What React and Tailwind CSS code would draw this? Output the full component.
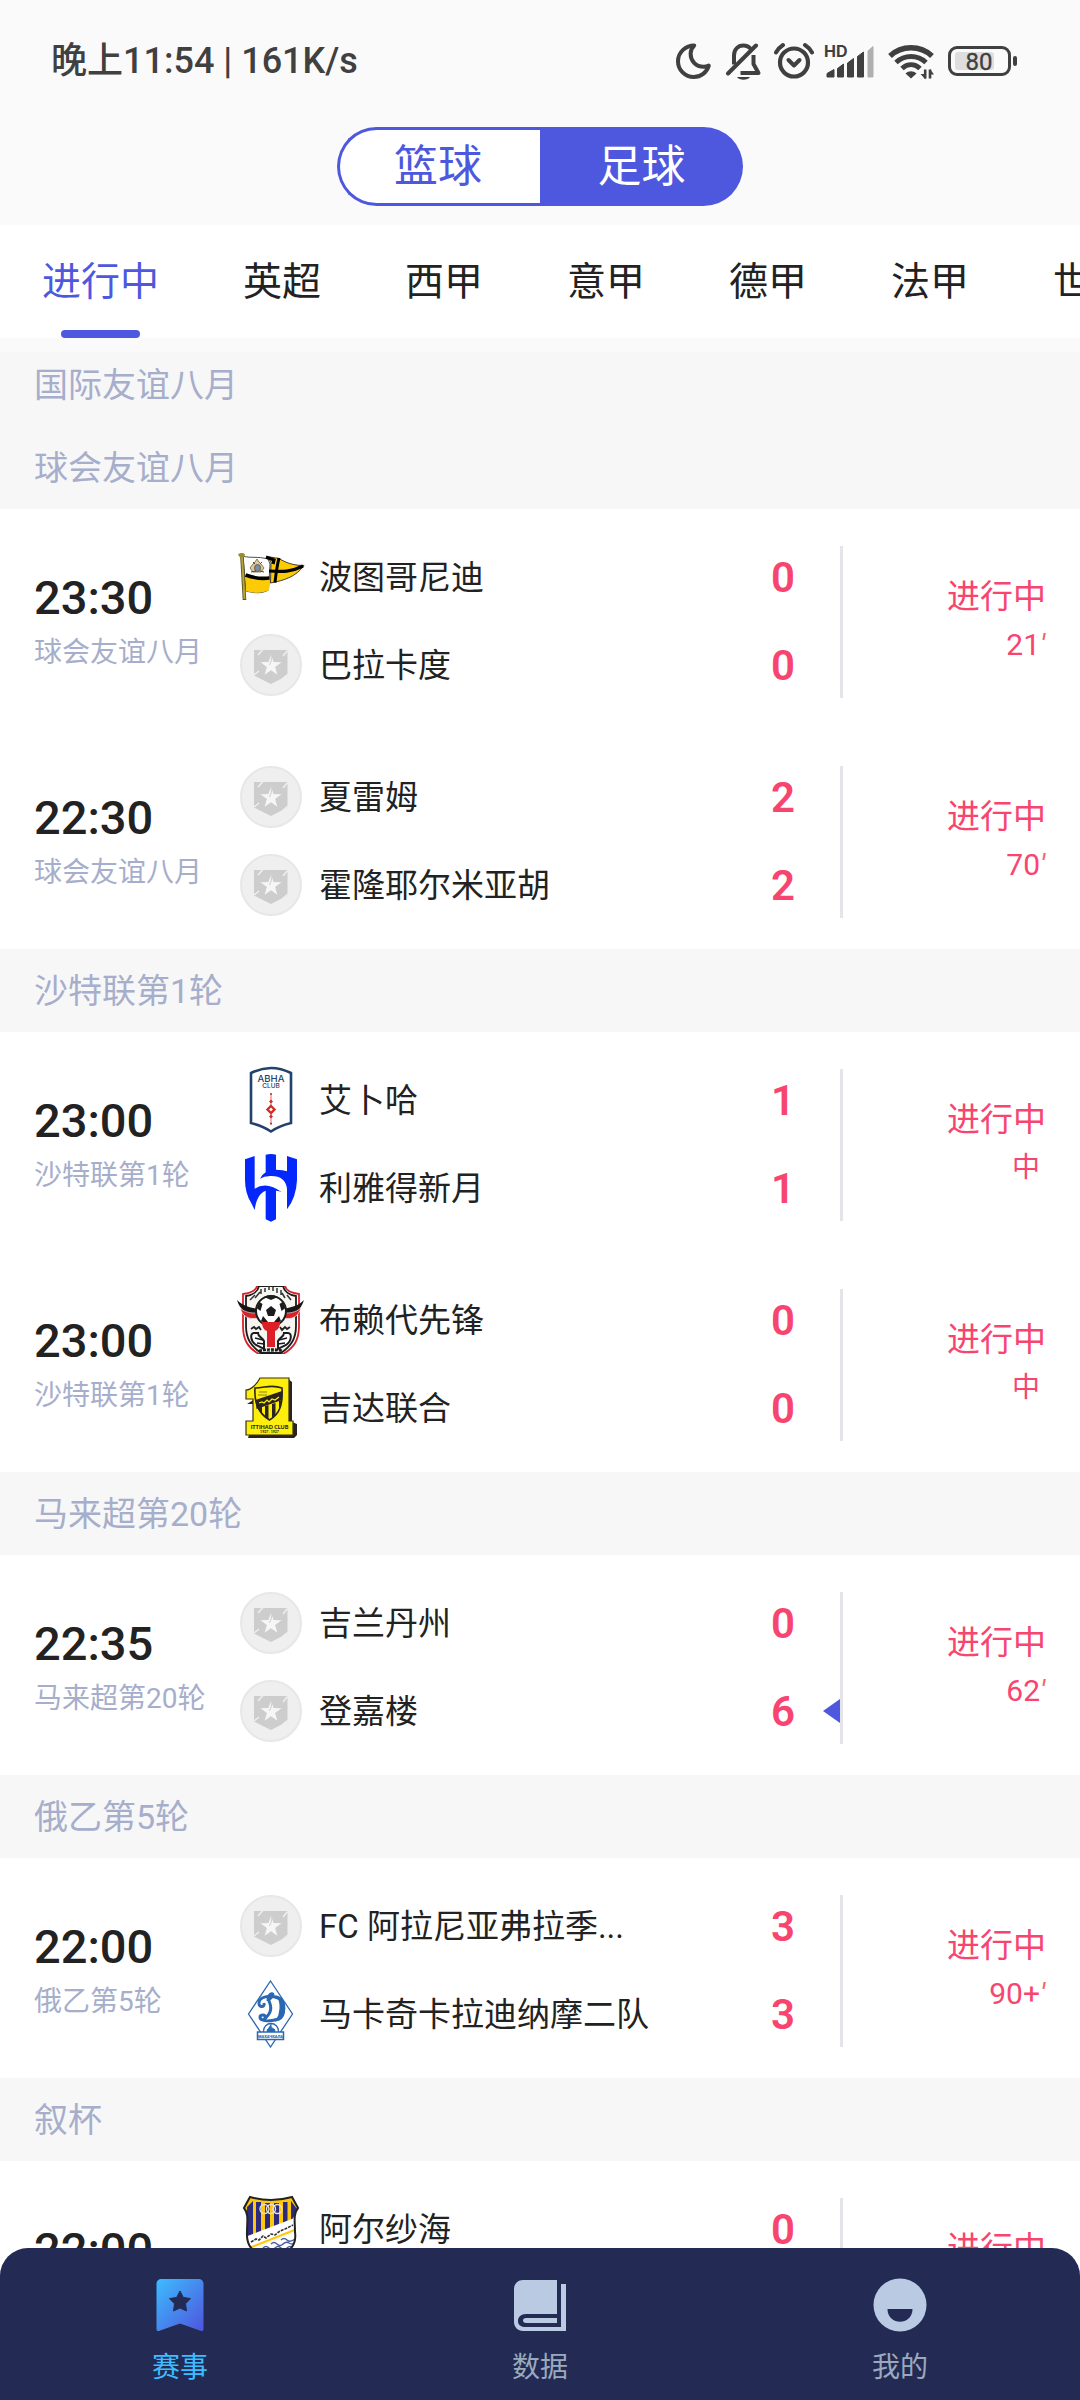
import React from "react";

/* ---------- status bar icons ---------- */

const INK = "#404040";

function MoonIcon() {
  return (
    <svg width="36" height="42" viewBox="0 0 36 42" fill="none" aria-hidden="true">
      <path
        d="M18.2 5.4C10 5.4 2 12 2 21.2a15.8 15.8 0 0 0 15.8 15.8c7 0 13-4.600 15-11.400a12.500 12.500 0 0 1-5.200 1.200c-8 0-13-6-13-13 0-3.400 1.400-6.400 3.600-8.400z"
        stroke={INK}
        strokeWidth="4"
        strokeLinejoin="round"
      />
    </svg>
  );
}

function BellOffIcon() {
  return (
    <svg width="36" height="42" viewBox="0 0 36 42" fill="none" aria-hidden="true">
      <path d="M8 24.500V15.500C8 9.500 12 5.500 17.200 5.500c3.400 0 6 1.400 7.600 3.600" stroke={INK} strokeWidth="4" />
      <path d="M27.500 15v9l5 9H14.500" stroke={INK} strokeWidth="4" strokeLinejoin="round" />
      <path d="M2 33.500L30 5.500" stroke={INK} strokeWidth="4" strokeLinecap="round" />
      <path d="M11 37h13c-2 3.600-11 3.600-13 0z" fill={INK} />
    </svg>
  );
}

function AlarmIcon() {
  return (
    <svg width="40" height="42" viewBox="0 0 40 42" fill="none" aria-hidden="true">
      <circle cx="20" cy="22.500" r="14" stroke={INK} strokeWidth="4.200" />
      <path d="M14.500 20l5.500 5.500 5.500-5.500" stroke={INK} strokeWidth="4" strokeLinecap="round" strokeLinejoin="round" />
      <path d="M2 12.500c1.600-3 4-5.600 7-7.500M38 12.500c-1.600-3-4-5.600-7-7.500" stroke={INK} strokeWidth="4" strokeLinecap="round" />
    </svg>
  );
}

function SignalIcon() {
  return (
    <svg width="52" height="42" viewBox="0 0 52 42" aria-hidden="true">
      <path d="M3 33.500l7-4V37H3zM13.500 28.500l6-4.500v13h-6zM23.500 23l6-4.500V37h-6zM33.500 16.500l6-4.500v25h-6z" fill={INK} stroke={INK} strokeLinejoin="round" />
      <path d="M44 11l5-4.500V37h-5z" fill="#b0b0b0" stroke="#b0b0b0" strokeLinejoin="round" />
      <text x="0" y="17" fontSize="16" fontWeight="700" fill={INK} fontFamily="Inter, sans-serif">
        HD
      </text>
    </svg>
  );
}

function WifiIcon() {
  return (
    <svg width="48" height="42" viewBox="0 0 48 42" fill="none" aria-hidden="true">
      <path d="M2 16c11.500-11 30.500-11 42 0" stroke={INK} strokeWidth="5.400" />
      <path d="M8 22.500c8.500-8 21.500-8 30 0" stroke={INK} strokeWidth="5" />
      <path d="M14 28.500c5.500-5 12.500-5 18 0" stroke={INK} strokeWidth="5" />
      <path d="M17.500 33.500c3.300-3 7.700-3 11 0L23 38.500z" fill={INK} />
      <path d="M37.200 29.500V38.500M42 29.500V38.500" stroke={INK} strokeWidth="2.600" />
      <path d="M37.500 39.500l-5-5.500h5zM42 29l4 5.500h-4z" fill={INK} />
    </svg>
  );
}

function BatteryIcon() {
  return (
    <svg width="70" height="42" viewBox="0 0 70 42" fill="none" aria-hidden="true">
      <rect x="1.500" y="7.500" width="60" height="27" rx="7.500" stroke={INK} strokeWidth="3" />
      <rect x="7" y="12" width="39" height="18" rx="3" fill="#dedede" />
      <rect x="65" y="16" width="4" height="10" rx="2" fill={INK} />
      <text x="31" y="29.500" textAnchor="middle" fontSize="24" fill={INK} stroke={INK} strokeWidth=".3" fontFamily="Roboto, sans-serif">
        80
      </text>
    </svg>
  );
}

/* ---------- club crests ---------- */

function DefaultCrest() {
  return (
    <svg width="68" height="68" viewBox="0 0 68 68" aria-hidden="true">
      <circle cx="34" cy="34" r="30" fill="#efefef" stroke="#e7e7e7" strokeWidth="2" />
      <path d="M17 19h33.500v25.500L34 53 17 44.500z" fill="#cdcdcd" />
      <path d="M21 24l5-5.500M46 25l4.500-5.500M17 44l5-4M45 48l6-5" stroke="#efefef" strokeWidth="1.500" />
      <path d="M34 23.500l2.500 7.500 8 .2-6.400 4.800 2.300 7.700L34 39.200l-6.400 4.500 2.300-7.700-6.400-4.800 8-.2z" fill="#f6f6f6" />
      <path d="M34 24l.5 5-2 5" stroke="#cdcdcd" strokeWidth="1" fill="none" />
    </svg>
  );
}

function PennantCrest() {
  return (
    <svg width="68" height="68" viewBox="0 0 68 68" aria-hidden="true">
      <path d="M6 13c7 2.500 14 0 25 3l2 5-1.500 26c-7 4-15 3-22.500 1z" fill="#fff" stroke="#222" strokeWidth=".8" />
      <path d="M8.500 33c8 2 15 3 24.500 2.500L32 47c-7 3.500-15 3.500-23 1z" fill="#fccb05" />
      <path d="M8.500 32c8 3 16 4 24 3" stroke="#000" strokeWidth="3.500" fill="none" />
      <path d="M30 13.500l12 2c8 5 16 7 25 7-6 8-14 14-33.500 17.500l.5-21z" fill="#fccb05" stroke="#111" strokeWidth=".8" />
      <path d="M29 14l8 3-1 4M66 23c-12 6-20 6-34 5" stroke="#000" strokeWidth="3.200" fill="none" />
      <path d="M42 15c-2 8-3 15-4 24.500" stroke="#000" strokeWidth="3" fill="none" />
      <path d="M13 25l3-4 2-2 2-3 2 3 2 2 3 4-3 4h-8z" fill="#d8cba8" stroke="#8b7a45" strokeWidth="1" />
      <ellipse cx="20.500" cy="25" rx="3" ry="3.500" fill="#6d93ab" stroke="#7a3d22" strokeWidth=".8" />
      <path d="M14 29l5-1M27 29l-4-1M16 19l2 2M25 19l-2 2" stroke="#54451f" strokeWidth="1" />
      <path d="M5 14l2.500 43" stroke="#59531b" strokeWidth="3.600" />
      <path d="M5 14l2.500 42" stroke="#b5a13f" strokeWidth="2" />
      <path d="M1 11.500c1.500-2 6-2 7 0l-1 3H3z" fill="#9c8a2c" />
    </svg>
  );
}

function AbhaCrest() {
  return (
    <svg width="68" height="68" viewBox="0 0 68 68" aria-hidden="true">
      <path d="M14 7Q24 2 34 2t20 5v50Q42 60 34 65.500 26 60 14 57z" fill="#fff" stroke="#23426b" strokeWidth="2.600" />
      <text x="34" y="16" textAnchor="middle" fontSize="9.500" fontWeight="500" fill="#23426b" fontFamily="Inter, sans-serif">
        ABHA
      </text>
      <text x="34" y="21.500" textAnchor="middle" fontSize="6.500" fontWeight="500" fill="#23426b" fontFamily="Inter, sans-serif">
        CLUB
      </text>
      <path d="M34 27v32" stroke="#d98683" strokeWidth="1.200" />
      <path d="M34 33.500l2 2-2 2-2-2zM34 48.500l2 2-2 2-2-2z" fill="#cf2f2b" />
      <path d="M34 40l3.500 3.500L34 47l-3.500-3.500z" fill="#fff" stroke="#cf2f2b" strokeWidth="2.400" />
      <path d="M33 28h2M33 57.500h2" stroke="#cf2f2b" strokeWidth="1.600" />
    </svg>
  );
}

function HilalCrest() {
  return (
    <svg width="68" height="68" viewBox="51 342 204 204" aria-hidden="true">
      <g fill="#0428fb">
        <path d="M75 358L104 348V446Q140 422 186 457 178 452 168 452V538L153 545 137 538V452Q110 462 104 510L94 490Q75 460 75 420z" />
        <path d="M137 344Q153 340 168 344V389Q190 389 201 394V348L231 358V420Q229 472 201 508V446Q196 406 150 408 132 409 120 416 128 402 137 397z" />
      </g>
    </svg>
  );
}

function RaedCrest() {
  return (
    <svg width="68" height="68" viewBox="0 0 68 68" aria-hidden="true">
      <path d="M20 0C19 4 14 7 6 8v32c0 14 5 22 16 28h24c11-6 16-14 16-28V8c-8-1-13-4-14-8z" fill="#fff" stroke="#d8222a" strokeWidth="1.800" />
      <path d="M22 0c-1 5-6 9-13 10v30c0 13 5 20 15 27h20c10-7 15-14 15-27V10C52 9 47 5 46 0z" fill="#f7f5f0" stroke="#1c1c1c" strokeWidth="1.800" />
      <path d="M13 14l5-5M18 12l5-6M24 8V3M28 6V2M32 4V0M36 5V1M40 7V2M44 9V4M48 12l-3-5M54 14l-4-5" stroke="#333" strokeWidth="1.500" />
      <path d="M0 14c6 6 12 7 20 9l2 7c-10 0-19-5-22-16zM67 14c-6 6-12 7-20 9l-2 7c10 0 19-5 22-16z" fill="#161616" />
      <path d="M3 22c6 5 12 5 16 5l2 5C12 34 6 31 3 22zM64 22c-6 5-12 5-16 5l-2 5c9 2 15-1 18-10z" fill="#d8222a" stroke="#fff" strokeWidth=".6" />
      <circle cx="34" cy="25" r="15" fill="#fff" stroke="#1c1c1c" strokeWidth="2" />
      <path d="M34 20l5 4-2 6h-6l-2-6zM27 11l7 3 7-3-4-1.500h-6zM19.500 22l4 3 2-7-3-2zM48.500 22l-4 3-2-7 3-2zM24 35l2-5 5 6v3zM44 35l-2-5-5 6v3z" fill="#1c1c1c" />
      <path d="M14 43l3-2 2 2 3-2 2 3M43 41l2 3 3-3 2 2 3-2" stroke="#222" strokeWidth="1.800" fill="none" />
      <path d="M17 47c-4 0-4 8 2 12l8 4v-8c-2-4-6-4-6-8zM51 47c4 0 4 8-2 12l-8 4v-8c2-4 6-4 6-8z" fill="#fff" stroke="#1c1c1c" strokeWidth="2" />
      <path d="M18 52l8 2M20 57l7 1M50 52l-8 2M48 57l-7 1" stroke="#1c1c1c" strokeWidth="1.400" />
      <path d="M25 36h18c0 5-2 8-5 9v16h-8V45c-3-1-5-4-5-9z" fill="#dd2027" />
      <path d="M22 65c8-2 16-2 24 0M26 68c5-2 11-2 16 0" stroke="#1c1c1c" strokeWidth="2.600" strokeDasharray="3 1" fill="none" />
    </svg>
  );
}

function IttihadCrest() {
  return (
    <svg width="68" height="68" viewBox="0 0 68 68" aria-hidden="true">
      <path d="M10 30h6v18l-5 16h46l3-3V50l-5-2V8l-5-4z" fill="#2b2320" />
      <path d="M23 4h29v43h4v14H9V47h7V25H9v-9c5 0 11-6 14-12z" fill="#fdee0b" stroke="#3a3212" strokeWidth="1.200" />
      <path d="M18 14c10 0 16-4 27 0 1 16-2 26-12.500 32C21 39 17 28 18 14z" fill="#fdee0b" stroke="#2b2320" strokeWidth="1.600" />
      <path d="M18.500 26L45 17v9l-25.500 9z" fill="#2b2320" />
      <path d="M21 34l4-1.500V41l-4-6zM28 32l3.500-1v14L28 43zM35 30l3.500-1v12L35 44zM42 27l3-1-3 10z" fill="#2b2320" />
      <path d="M22 29l3-1 2 1 3-3 2 2 3-3 3 1 4-3" stroke="#fdee0b" strokeWidth="1.200" fill="none" />
      <path d="M22 18h8M21 21h9" stroke="#8a8118" strokeWidth="1.200" />
      <text x="32.500" y="54.500" textAnchor="middle" fontSize="5.500" fontWeight="900" fill="#2b2320" fontFamily="Lato, sans-serif">
        ITTIHAD CLUB
      </text>
      <text x="32.500" y="59" textAnchor="middle" fontSize="3.500" fontWeight="700" fill="#2b2320" fontFamily="Lato, sans-serif">
        1927 . 1927
      </text>
    </svg>
  );
}

function DynamoCrest() {
  return (
    <svg width="68" height="68" viewBox="0 0 68 68" aria-hidden="true">
      <path d="M33.500 1L55.500 34 33.500 67 11.500 34z" fill="#fff" stroke="#2a68b2" strokeWidth="1.300" />
      <path
        d="M26 40c-4-1-4-5 0-5 3 0 3 4 0 5 3 2 8 1 16-1 6-3 7-18-1-21-7-3-20-2-19 6 1 4 6 3 5-1"
        fill="none"
        stroke="#2a68b2"
        strokeWidth="3"
      />
      <path d="M41 17c9 3 8 20-1 23 4-6 5-17 1-23z" fill="#2a68b2" stroke="#2a68b2" strokeWidth="2" />
      <path d="M31 21c0-7 5-9 5-6s-5 3-4 6 3 6 1 11-6 6-5 8" fill="none" stroke="#2a68b2" strokeWidth="3" />
      <circle cx="34" cy="51" r="7.500" fill="#fff" stroke="#2a68b2" strokeWidth="1.300" />
      <path d="M34 44v3l-4 3M34 47l4 3M30 50l4-2 4 2-1 3h-6z" fill="#2a68b2" stroke="#2a68b2" />
      <rect x="20.500" y="52" width="26" height="7.500" fill="#fff" stroke="#2a68b2" strokeWidth="1.500" />
      <text x="33.500" y="57.500" textAnchor="middle" fontSize="4" fontWeight="900" fill="#2a68b2" fontFamily="Roboto, sans-serif">
        МАХАЧКАЛА
      </text>
    </svg>
  );
}

function SahelCrest() {
  const shield = "M13 2c14 4 28 4 42 0l6 11c-5 6-3 14-3 24 2 14-5 20-24 30C15 57 9 51 10 37c0-10 2-18-3-24z";
  return (
    <svg width="68" height="68" viewBox="0 0 68 68" aria-hidden="true">
      <defs>
        <clipPath id="sahel-shield">
          <path d={shield} />
        </clipPath>
      </defs>
      <g clipPath="url(#sahel-shield)">
        <path d="M0 0h68v68H0z" fill="#fdc70c" />
        <path d="M10 12l6-6v35h-6zM19 7h5v34h-5zM28 8h5v32h-5zM37 8h5v30h-5zM46 7h4.500v28H46zM54 6l6 8-6 14z" fill="#2c2a7c" />
        <path d="M8 42l52-20v14L12 56z" fill="#fff" />
        <path d="M14 47l5-3 3 1 4-4 3 2 5-4 4 1 5-4 5-2 8-4" stroke="#333" strokeWidth="1.600" strokeDasharray="3 1" fill="none" />
        <path d="M12 56l48-20v32H12z" fill="#fff" />
        <path d="M10 54l50-20" stroke="#fdc70c" strokeWidth="2" />
        <path d="M44 45q3-3 6 0t8-1M34 49q3-3 6 0t6 0 6-1 6 0M26 53q3-3 6 0t6 0 6 0 6 0 6 0M22 57q3-3 6 0t6 0 6 0 6 0" stroke="#4a5f9f" strokeWidth="1.400" fill="none" />
      </g>
      <path d={shield} fill="none" stroke="#222" strokeWidth="2" />
      <g fill="none" stroke="#e8e0d8" strokeWidth="1.400">
        <circle cx="27.500" cy="14" r="4.500" />
        <circle cx="34" cy="14" r="4.500" />
        <circle cx="40.500" cy="14" r="4.500" />
      </g>
    </svg>
  );
}

/* ---------- bottom bar icons ---------- */

function BookmarkIcon() {
  return (
    <svg width="54" height="54" viewBox="0 0 54 54" aria-hidden="true">
      <defs>
        <linearGradient id="bookmark-fill" x1="0" y1="0" x2="1" y2="1">
          <stop offset="0" stopColor="#3cbdff" />
          <stop offset="1" stopColor="#4f54dd" />
        </linearGradient>
      </defs>
      <path d="M8.500 1h37c3 0 5 2 5 5v45c0 2-1.500 2.500-3 1.800L27 45.500 6.500 52.800C5 53.500 3.500 53 3.500 51V6c0-3 2-5 5-5z" fill="url(#bookmark-fill)" />
      <path d="M27 13l3.300 6.400 7.200 1.200-5 5.200 1 7.200-6.500-3-6.500 3 1-7.200-5-5.200 7.200-1.200z" fill="#232a54" stroke="#232a54" strokeLinejoin="round" />
    </svg>
  );
}

function BookIcon() {
  return (
    <svg width="54" height="54" viewBox="0 0 54 54" aria-hidden="true">
      <path d="M10 2h34v34H13c-5 0-8 3-8 7s3 6 8 6h35V6h5v47H10c-5 0-9-4-9-9V11c0-5 4-9 9-9z" fill="#b9cae2" />
      <path d="M13 40h31v5H13c-4 0-4-5 0-5z" fill="#b9cae2" />
    </svg>
  );
}

function SmileIcon() {
  return (
    <svg width="54" height="54" viewBox="0 0 54 54" aria-hidden="true">
      <circle cx="27" cy="27" r="26.500" fill="#b9cae2" />
      <path d="M14.500 31h25c0 17-25 17-25 0z" fill="#232a54" />
    </svg>
  );
}

/* ---------- data ---------- */

const leagues = ["英超", "西甲", "意甲", "德甲", "法甲", "世界杯"];

const sections = [
  { title: "国际友谊八月", matches: [] },
  {
    title: "球会友谊八月",
    matches: [
      {
        time: "23:30",
        round: "球会友谊八月",
        minute: "21",
        teams: [
          { name: "波图哥尼迪", score: 0, crest: PennantCrest },
          { name: "巴拉卡度", score: 0, crest: DefaultCrest },
        ],
      },
      {
        time: "22:30",
        round: "球会友谊八月",
        minute: "70",
        teams: [
          { name: "夏雷姆", score: 2, crest: DefaultCrest },
          { name: "霍隆耶尔米亚胡", score: 2, crest: DefaultCrest },
        ],
      },
    ],
  },
  {
    title: "沙特联第1轮",
    matches: [
      {
        time: "23:00",
        round: "沙特联第1轮",
        teams: [
          { name: "艾卜哈", score: 1, crest: AbhaCrest },
          { name: "利雅得新月", score: 1, crest: HilalCrest },
        ],
      },
      {
        time: "23:00",
        round: "沙特联第1轮",
        teams: [
          { name: "布赖代先锋", score: 0, crest: RaedCrest },
          { name: "吉达联合", score: 0, crest: IttihadCrest },
        ],
      },
    ],
  },
  {
    title: "马来超第20轮",
    matches: [
      {
        time: "22:35",
        round: "马来超第20轮",
        minute: "62",
        teams: [
          { name: "吉兰丹州", score: 0, crest: DefaultCrest },
          { name: "登嘉楼", score: 6, crest: DefaultCrest, scored: true },
        ],
      },
    ],
  },
  {
    title: "俄乙第5轮",
    matches: [
      {
        time: "22:00",
        round: "俄乙第5轮",
        minute: "90+",
        teams: [
          { name: "FC 阿拉尼亚弗拉季...", score: 3, crest: DefaultCrest },
          { name: "马卡奇卡拉迪纳摩二队", score: 3, crest: DynamoCrest },
        ],
      },
    ],
  },
  {
    title: "叙杯",
    matches: [
      {
        time: "22:00",
        round: "叙杯",
        teams: [{ name: "阿尔纱海", score: 0, crest: SahelCrest }],
      },
    ],
  },
];

/* ---------- parts ---------- */

function Match({ match }) {
  return (
    <li className="flex min-h-[220px] items-start bg-white pr-8 pl-[34px]">
      <div className="w-[203px] shrink-0 pt-[62px] whitespace-nowrap">
        <p className="text-[47px] leading-[54px] font-medium text-[#222]">{match.time}</p>
        <p className="mt-2 text-[28px] leading-10 text-[#a6aecb]">{match.round}</p>
      </div>
      <ul className="flex min-w-0 flex-1 flex-col gap-5 pt-[34px]">
        {match.teams.map((team) => (
          <li key={team.name} className="relative flex h-[68px] items-center pr-[45px]">
            <team.crest />
            <span className="ml-[14px] min-w-0 flex-1 truncate pt-0.5 text-[33px] leading-[48px] text-[#222]">{team.name}</span>
            <span className="pt-0.5 text-[42px] leading-[48px] font-semibold text-[#f8456f]">{team.score}</span>
            {team.scored && (
              <svg className="absolute right-0" width="17" height="24" viewBox="0 0 17 24" aria-label="刚刚进球">
                <path d="M17 0v24L0 12z" fill="#4e58de" />
              </svg>
            )}
          </li>
        ))}
      </ul>
      <div className="mt-[37px] h-[152px] w-[3px] shrink-0 bg-[#e4e4ea]" />
      <div className="flex w-[205px] shrink-0 flex-col items-end pt-[66px] text-[#f8456f]">
        <p className="pr-0.5 text-[33px] leading-[44px]">进行中</p>
        <p className="mt-2 flex text-[30px] leading-9">
          {match.minute ? (
            <>
              {match.minute}
              <span className="w-2 text-[#f5655e] italic">′</span>
            </>
          ) : (
            <span className="pr-2 text-[28px]">中</span>
          )}
        </p>
      </div>
    </li>
  );
}

function NavItem({ href, label, icon, active }) {
  return (
    <a
      href={href}
      aria-current={active ? "page" : undefined}
      className={
        active
          ? "flex flex-1 flex-col items-center gap-4 text-[#3cbdff]"
          : "flex flex-1 flex-col items-center gap-4 text-[#9aaabd]"
      }
    >
      {icon}
      <span className="text-[28px] leading-10">{label}</span>
    </a>
  );
}

export default function App() {
  return (
    <div className="flex h-screen flex-col overflow-hidden bg-[#fafafa] font-['Roboto','Noto_Sans_CJK_SC',sans-serif]">
      <div className="flex h-[122px] shrink-0 items-center justify-between pr-[62px] pl-[51px] text-[#404040]">
        <p className="text-[36px] leading-[48px] font-medium">晚上11:54 | 161K/s</p>
        <div className="flex items-center">
          <MoonIcon />
          <div className="ml-3.5 flex"><BellOffIcon /></div>
          <div className="ml-3 flex"><AlarmIcon /></div>
          <div className="ml-2.5 flex"><SignalIcon /></div>
          <div className="ml-3 flex"><WifiIcon /></div>
          <div className="ml-3 flex"><BatteryIcon /></div>
        </div>
      </div>

      <header className="flex shrink-0 justify-center pt-[5px] pb-[19px]">
        <div className="flex h-[79px] w-[406px] text-[44px] leading-[56px]">
          <button type="button" className="w-1/2 rounded-l-[40px] border-[3px] border-r-0 border-[#4e58de] bg-white pr-1 text-[#4e58de]">
            篮球
          </button>
          <button type="button" aria-pressed="true" className="w-1/2 rounded-r-[40px] bg-[#4e58de] text-white">
            足球
          </button>
        </div>
      </header>

      <nav className="flex h-[113px] shrink-0 overflow-hidden bg-white text-[39px] leading-[48px] whitespace-nowrap">
        <button type="button" aria-current="true" className="relative shrink-0 px-[42px] text-[#4e58de]">
          进行中
          <span className="absolute inset-x-[61px] bottom-0 h-2 rounded-full bg-[#4e58de]" />
        </button>
        {leagues.map((name) => (
          <button key={name} type="button" className="shrink-0 px-[42px] text-[#222]">
            {name}
          </button>
        ))}
      </nav>

      <div className="z-10 h-3.5 shrink-0 bg-[#fafafa]" />

      <main className="-mt-[9px] min-h-0 flex-1 overflow-hidden bg-white">
        {sections.map((section) => (
          <section key={section.title}>
            <h2 className="flex h-[83px] items-center bg-[#f7f7f7] px-[34px] text-[34px] leading-[48px] text-[#a6aecb]">
              {section.title}
            </h2>
            <ul>
              {section.matches.map((match) => (
                <Match key={match.time + match.teams[0].name} match={match} />
              ))}
            </ul>
          </section>
        ))}
      </main>

      <nav className="z-20 -mt-7 flex h-[152px] shrink-0 rounded-t-[28px] bg-[#232a54] pt-[30px]">
        <NavItem href="#matches" label="赛事" icon={<BookmarkIcon />} active />
        <NavItem href="#stats" label="数据" icon={<BookIcon />} />
        <NavItem href="#me" label="我的" icon={<SmileIcon />} />
      </nav>
    </div>
  );
}
